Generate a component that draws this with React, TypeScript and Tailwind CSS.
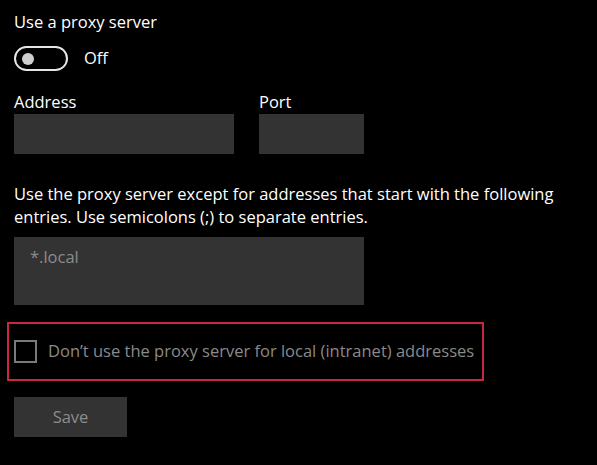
export default function App() {
  return (
    <div
      className="w-[597px] h-[465px] bg-black text-white overflow-hidden pl-[14px]"
      style={{ fontFamily: '"Open Sans", "Liberation Sans", Arial, sans-serif' }}
    >
      <div className="pt-[11px] text-[16.5px] leading-[22px]">Use a proxy server</div>

      <div className="mt-[13px] flex items-center h-[25px]">
        <div className="w-[54px] h-[25px] rounded-full border-2 border-[#e6e6e6] flex items-center pl-[6px]">
          <div className="w-[12px] h-[12px] rounded-full bg-[#cfcfcf]" />
        </div>
        <span className="ml-[16px] text-[16.5px]">Off</span>
      </div>

      <div className="mt-[20px] flex gap-[25px]">
        <div className="flex flex-col">
          <span className="text-[16.5px] leading-[22px]">Address</span>
          <div className="mt-[1px] w-[220px] h-[40px] bg-[#333333]" />
        </div>
        <div className="flex flex-col">
          <span className="text-[16.5px] leading-[22px]">Port</span>
          <div className="mt-[1px] w-[105px] h-[40px] bg-[#333333]" />
        </div>
      </div>

      <p className="mt-[28px] w-[560px] text-[16.5px] leading-[23px]">
        Use the proxy server except for addresses that start with the following
        entries. Use semicolons (;) to separate entries.
      </p>

      <div className="mt-[9px] w-[350px] h-[68px] bg-[#333333] pl-[16px] pt-[9px] text-[16.5px] leading-[22px] text-[#8c8c8c]">
        *.local
      </div>

      <div className="mt-[17px] -ml-[7px] w-[477px] h-[59px] border-2 border-[#c8283c] flex items-center pl-[5px]">
        <div className="w-[23px] h-[23px] border-2 border-[#7a7a7a]" />
        <span className="ml-[11px] text-[16.5px] text-[#8a8a8a]">
          Don’t use the proxy server for local (intranet) addresses
        </span>
      </div>

      <button className="mt-[16px] w-[113px] h-[40px] bg-[#333333] text-[16.5px] text-[#8c8c8c] flex items-center justify-center">
        Save
      </button>
    </div>
  );
}
